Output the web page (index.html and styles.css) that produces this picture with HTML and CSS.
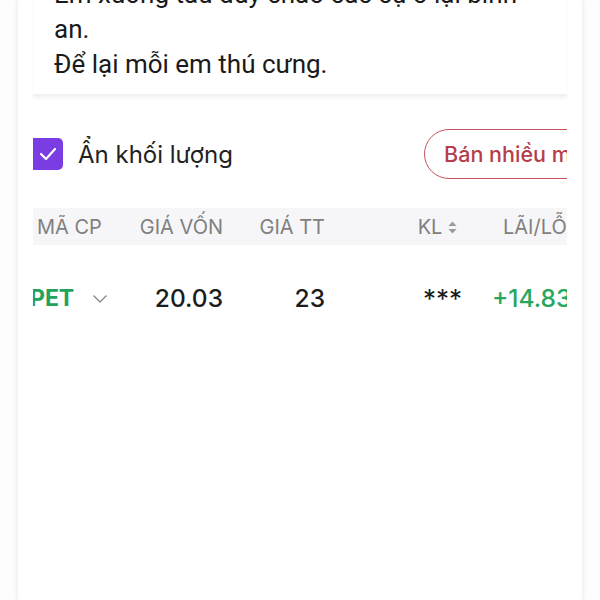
FILE: index.html
```html
<!DOCTYPE html>
<html lang="vi">

<head>
    <meta charset="UTF-8">
    <meta name="viewport" content="width=device-width, initial-scale=1.0">
    <title>Danh mục</title>
    <link rel="stylesheet" href="styles.css">
</head>

<body>
    <div class="frame">
        <div class="note">
            <p>Em xuống tàu đây chào các cụ ở lại bình an.<br>Để lại mỗi em thú cưng.</p>
        </div>

        <div class="holdings">
            <div class="toolbar">
                <label class="hide-vol">
                    <span class="check">
                        <svg width="18" height="14" viewBox="0 0 18 14">
                            <polyline points="2,7 7,12 16,2" fill="none" stroke="#fff" stroke-width="2.2"
                                stroke-linecap="round" stroke-linejoin="round" />
                        </svg>
                    </span>
                    Ẩn khối lượng
                </label>
                <button class="sell-many">Bán nhiều mã</button>
            </div>

            <div class="grid thead">
                <div class="c1">MÃ CP</div>
                <div class="c2">GIÁ VỐN</div>
                <div class="c3">GIÁ TT</div>
                <div class="c4">KL
                    <svg class="sort" width="9" height="13" viewBox="0 0 9 13">
                        <polygon points="4.5,0.5 8.5,5 0.5,5" fill="#9a9a9a" />
                        <polygon points="0.5,8 8.5,8 4.5,12.5" fill="#9a9a9a" />
                    </svg>
                </div>
                <div class="c5">LÃI/LỖ</div>
            </div>

            <div class="grid trow">
                <div class="c1">
                    <span class="code">PET</span>
                    <svg class="chev" width="16" height="10" viewBox="0 0 16 10">
                        <polyline points="1.5,1.5 8,8 14.5,1.5" fill="none" stroke="#8a8a8a" stroke-width="1.4" />
                    </svg>
                </div>
                <div class="c2 num">20.03</div>
                <div class="c3 num">23</div>
                <div class="c4 stars">***</div>
                <div class="c5 num up">+14.83%</div>
            </div>
        </div>
    </div>
</body>

</html>
```

FILE: styles.css
```css
body {
    margin: 0;
    background: #fdfdfd;
}

.frame {
    margin: 0 18px;
    padding: 0 15px;
    min-height: 600px;
    background: #fff;
    box-shadow: 0 0 5px 1px rgba(0, 0, 0, 0.07);
    overflow: hidden;
}

.note {
    margin-top: -23px;
    padding: 0 14px 12px 21px;
    background: #fff;
    border-bottom: 2px solid #f1f1f1;
    box-shadow: 0 2px 3px rgba(0, 0, 0, 0.05);
}

.note p {
    margin: 0;
    font-family: Roboto, "Liberation Sans", sans-serif;
    font-size: 26px;
    line-height: 35px;
    color: #1a1a1a;
}

.holdings {
    overflow: hidden;
    font-family: Inter, "Liberation Sans", sans-serif;
}

.toolbar {
    width: 575px;
    margin-top: 33px;
    display: flex;
    align-items: center;
    justify-content: space-between;
}

.hide-vol {
    display: flex;
    align-items: center;
    gap: 15px;
    font-size: 24px;
    color: #222;
}

.check {
    width: 34px;
    height: 32px;
    margin-left: -4px;
    border-radius: 5px;
    background: #7a3de4;
    display: flex;
    align-items: center;
    justify-content: center;
    padding-left: 3px;
    box-sizing: border-box;
}

.sell-many {
    height: 50px;
    padding: 0 24px 0 19px;
    border: 1.5px solid #c4525c;
    border-radius: 25px;
    background: #fff;
    font-family: Inter, "Liberation Sans", sans-serif;
    font-size: 21.5px;
    font-weight: 500;
    color: #b53d4a;
    white-space: nowrap;
}

.grid {
    display: grid;
    grid-template-columns: 105px 85px 102px 137px 140px;
    width: 569px;
    align-items: center;
}

.grid div {
    text-align: right;
    white-space: nowrap;
}

.grid .c1,
.grid .c5 {
    text-align: left;
}

.thead {
    margin-top: 29px;
    height: 37px;
    background: #f6f6f8;
    font-size: 20px;
    color: #808080;
}

.thead .c1 {
    padding-left: 4px;
}

.thead .c4 {
    padding-right: 5px;
}

.thead .c5 {
    padding-left: 41px;
}

.sort {
    vertical-align: 0;
}

.trow {
    height: 106px;
    font-size: 24.5px;
    font-weight: 500;
    color: #1c1c1c;
}

.trow .c1 {
    display: flex;
    align-items: center;
    gap: 18px;
    margin-left: -3px;
}

.trow .c5 {
    padding-left: 30px;
}

.code {
    font-weight: 700;
    font-size: 23px;
    color: #21a35a;
}

.chev {
    margin-top: 2px;
}

.stars {
    font-weight: 400;
    font-size: 26px;
}

.up {
    color: #27a75e;
}
```
